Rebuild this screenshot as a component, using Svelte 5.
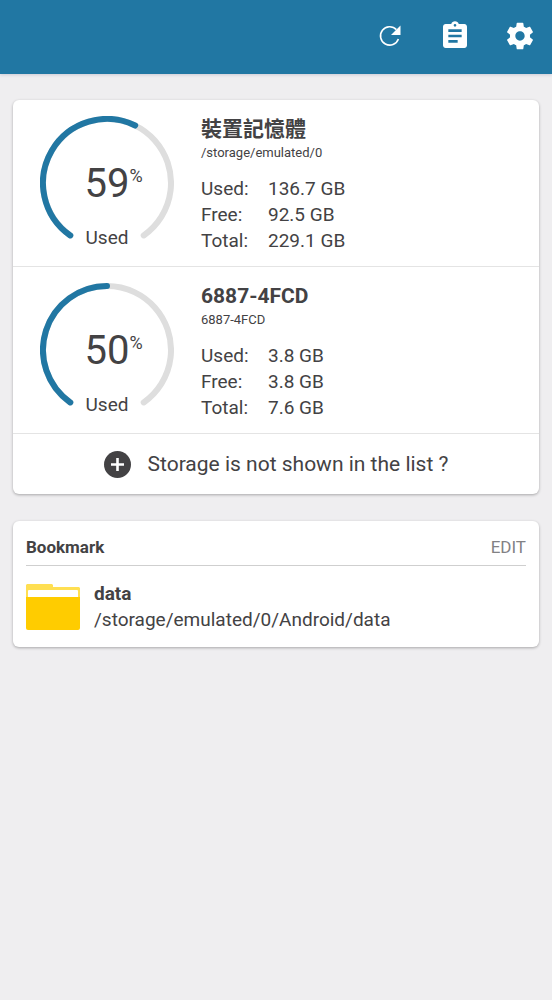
<script>
  const storages = [
    {
      name: '裝置記憶體',
      path: '/storage/emulated/0',
      percent: 59,
      sizes: { Used: '136.7 GB', Free: '92.5 GB', Total: '229.1 GB' }
    },
    {
      name: '6887-4FCD',
      path: '6887-4FCD',
      percent: 50,
      sizes: { Used: '3.8 GB', Free: '3.8 GB', Total: '7.6 GB' }
    }
  ];

  const bookmarks = [{ name: 'data', path: '/storage/emulated/0/Android/data' }];

  // The gauge is a 290° arc, open at the bottom.
  const SWEEP = 290;
  const RADIUS = 64;

  function arc(percent) {
    const point = (deg) => {
      const rad = ((deg - 90) * Math.PI) / 180;
      return `${(67 + RADIUS * Math.cos(rad)).toFixed(2)} ${(67 + RADIUS * Math.sin(rad)).toFixed(2)}`;
    };
    const sweep = (SWEEP * percent) / 100;
    const start = -SWEEP / 2;
    return `M${point(start)}A${RADIUS} ${RADIUS} 0 ${sweep > 180 ? 1 : 0} 1 ${point(start + sweep)}`;
  }
</script>

<div class="page">
  <header class="toolbar">
    <button aria-label="Refresh">
      <svg width="28" height="28" viewBox="0 0 28 28">
        <path d="M22.4 17A9.2 9.2 0 1 1 20.4 7.6" fill="none" stroke="#fff" stroke-width="1.6" />
        <path d="M24.5 3.6V13H15z" fill="#fff" />
      </svg>
    </button>
    <button aria-label="Clipboard">
      <svg width="32" height="32" viewBox="0 0 24 24" fill="#fff">
        <path
          d="M19 3h-4.18C14.4 1.84 13.3 1 12 1c-1.3 0-2.4.84-2.82 2H5c-1.1 0-2 .9-2 2v14c0 1.1.9 2 2 2h14c1.1 0 2-.9 2-2V5c0-1.1-.9-2-2-2zm-7 0c.55 0 1 .45 1 1s-.45 1-1 1-1-.45-1-1 .45-1 1-1zm2 14H7v-2h7v2zm3-4H7v-2h10v2zm0-4H7V7h10v2z"
        />
      </svg>
    </button>
    <button aria-label="Settings">
      <svg width="32" height="32" viewBox="0 0 24 24" fill="#fff">
        <path
          d="M19.43 12.98c.04-.32.07-.64.07-.98s-.03-.66-.07-.98l2.11-1.65c.19-.15.24-.42.12-.64l-2-3.46c-.12-.22-.39-.3-.61-.22l-2.49 1c-.52-.4-1.08-.73-1.69-.98l-.38-2.65C14.46 2.18 14.25 2 14 2h-4c-.25 0-.46.18-.49.42l-.38 2.65c-.61.25-1.17.59-1.69.98l-2.49-1c-.23-.09-.49 0-.61.22l-2 3.46c-.13.22-.07.49.12.64l2.11 1.65c-.04.32-.07.65-.07.98s.03.66.07.98l-2.11 1.65c-.19.15-.24.42-.12.64l2 3.46c.12.22.39.3.61.22l2.49-1c.52.4 1.08.73 1.69.98l.38 2.65c.03.24.24.42.49.42h4c.25 0 .46-.18.49-.42l.38-2.65c.61-.25 1.17-.59 1.69-.98l2.49 1c.23.09.49 0 .61-.22l2-3.46c.12-.22.07-.49-.12-.64l-2.11-1.65zM12 15.5c-1.93 0-3.5-1.57-3.5-3.5s1.57-3.5 3.5-3.5 3.5 1.57 3.5 3.5-1.57 3.5-3.5 3.5z"
        />
      </svg>
    </button>
  </header>

  <main>
    <section class="card">
      {#each storages as storage}
        <article class="storage">
          <div class="gauge">
            <svg width="134" height="134" viewBox="0 0 134 134" aria-hidden="true">
              <path d={arc(100)} stroke="#dedede" />
              <path d={arc(storage.percent)} stroke="#2177a3" />
            </svg>
            <div class="percent">{storage.percent}<span>%</span></div>
            <div class="caption">Used</div>
          </div>
          <div class="info">
            <h2>{storage.name}</h2>
            <p>{storage.path}</p>
            <dl>
              {#each Object.entries(storage.sizes) as [label, size]}
                <dt>{label}:</dt>
                <dd>{size}</dd>
              {/each}
            </dl>
          </div>
        </article>
      {/each}
      <button class="missing">
        <svg width="27" height="27" viewBox="0 0 27 27" aria-hidden="true">
          <circle cx="13.5" cy="13.5" r="13.5" fill="#434244" />
          <path d="M13.5 7v13M7 13.5h13" stroke="#fff" stroke-width="2.6" />
        </svg>
        Storage is not shown in the list ?
      </button>
    </section>

    <section class="card bookmarks">
      <div class="heading">
        <h3>Bookmark</h3>
        <button>EDIT</button>
      </div>
      {#each bookmarks as bookmark}
        <a class="bookmark" href="#{bookmark.path}">
          <svg width="54" height="46" viewBox="0 0 54 46" aria-hidden="true">
            <path d="M1 0h25l1 1v2h26l1 1v12H0V1z" fill="#ffdf52" />
            <rect x="2" y="6" width="50" height="9" rx="1" fill="#fff" />
            <path d="M0 13h54v31q0 2-2 2H2q-2 0-2-2z" fill="#fc0" />
          </svg>
          <span class="text">
            <strong>{bookmark.name}</strong>
            <span>{bookmark.path}</span>
          </span>
        </a>
      {/each}
    </section>
  </main>
</div>

<style>
  :global(body) {
    margin: 0;
    background: #efeef0;
  }

  .page {
    font-family: Roboto, 'Noto Sans CJK TC', sans-serif;
    font-size: 19px;
    line-height: 26px;
    color: #434244;
  }

  button {
    padding: 0;
    border: 0;
    background: none;
    font: inherit;
    color: inherit;
    cursor: pointer;
  }

  h2,
  h3,
  p,
  dl,
  dd {
    margin: 0;
  }

  svg {
    display: block;
    flex: none;
  }

  .toolbar {
    display: flex;
    justify-content: flex-end;
    gap: 33px;
    height: 74px;
    box-sizing: border-box;
    padding: 0 16px 2px 0;
    background: #2177a3;
    box-shadow: 0 1px 3px rgba(60, 60, 110, 0.2);
  }

  .toolbar button {
    display: flex;
    align-items: center;
    justify-content: center;
    width: 32px;
  }

  main {
    display: flex;
    flex-direction: column;
    gap: 27px;
    padding: 26px 13px;
  }

  .card {
    border-radius: 6px;
    background: #fff;
    box-shadow: 0 1px 3px rgba(0, 0, 0, 0.3);
  }

  .storage {
    display: flex;
    gap: 27px;
    padding: 16px 27px 12px;
    border-bottom: 1px solid #e4e4e4;
  }

  .gauge {
    position: relative;
    height: 136px;
    text-align: center;
  }

  .gauge path {
    fill: none;
    stroke-width: 6;
    stroke-linecap: round;
  }

  .percent {
    position: absolute;
    top: 48px;
    left: 50%;
    transform: translateX(-50%);
    font-size: 40px;
    line-height: 40px;
  }

  .percent span {
    position: absolute;
    top: 2px;
    left: 100%;
    font-size: 18px;
    line-height: 20px;
  }

  .caption {
    position: absolute;
    inset: auto 0 1px;
  }

  h2 {
    font-size: 21px;
    line-height: 26px;
  }

  p {
    font-size: 13px;
    line-height: 22px;
  }

  dl {
    display: grid;
    grid-template-columns: 67px auto;
    margin-top: 12px;
  }

  .missing {
    display: flex;
    align-items: center;
    justify-content: center;
    gap: 17px;
    width: 100%;
    height: 60px;
    font-size: 21px;
  }

  .bookmarks {
    padding: 13px 13px 14px;
  }

  .heading {
    display: flex;
    justify-content: space-between;
    padding-bottom: 5px;
    border-bottom: 1px solid #cfcfcf;
  }

  .heading h3 {
    font-size: 17px;
  }

  .heading button {
    font-size: 17px;
    color: #828184;
  }

  .bookmark {
    display: flex;
    align-items: center;
    gap: 14px;
    padding-top: 15px;
    color: inherit;
    text-decoration: none;
  }

  .text {
    display: flex;
    flex-direction: column;
  }
</style>
